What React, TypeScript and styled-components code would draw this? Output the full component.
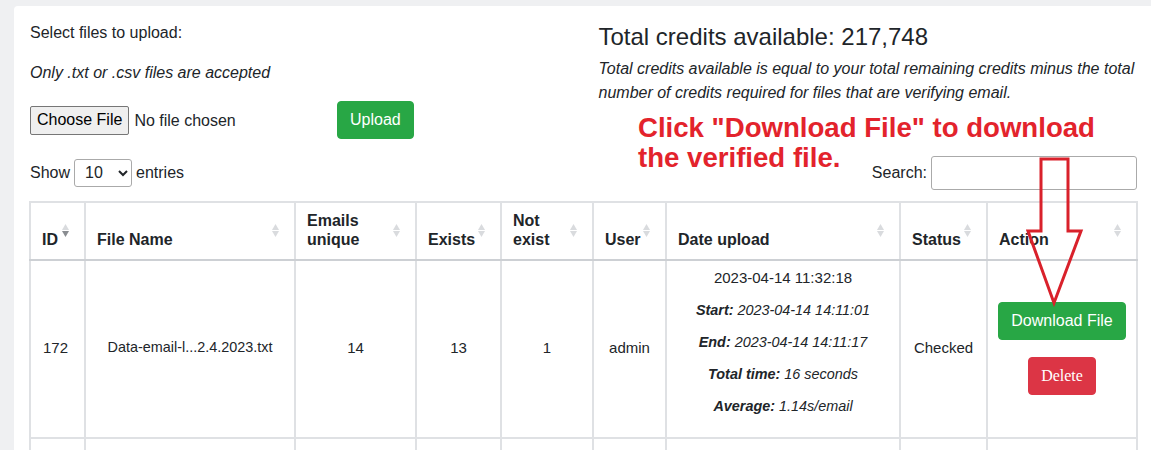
import styled, { createGlobalStyle } from 'styled-components'

const GlobalStyle = createGlobalStyle`
  html, body {
    margin: 0;
    padding: 0;
    overflow: hidden;
    background: #eff0f2;
    font-family: 'Liberation Sans', Arial, sans-serif;
    color: #212529;
  }
`

const Page = styled.div`
  padding: 6px 0 0 14px;
`

const Card = styled.div`
  position: relative;
  background: #fff;
  border-radius: 4px 0 0 0;
  padding: 15px 14px 0 16px;
  min-height: 500px;
`

const TopRow = styled.div`
  display: grid;
  grid-template-columns: 1fr 1fr;
  column-gap: 30px;
`

const Column = styled.div`
  display: flex;
  flex-direction: column;
`

const Text = styled.p<{ $italic?: boolean; $gap?: number }>`
  margin: ${({ $gap }) => $gap ?? 0}px 0 0;
  font-size: 16px;
  line-height: 24px;
  font-style: ${({ $italic }) => ($italic ? 'italic' : 'normal')};
`

const UploadRow = styled.div`
  display: flex;
  align-items: center;
  margin-top: 16px;
  height: 38px;
`

const FileInput = styled.input`
  width: 300px;
  font-family: 'Liberation Sans', Arial, sans-serif;
  font-size: 16px;
  color: #212529;

  &::file-selector-button {
    font-family: 'Liberation Sans', Arial, sans-serif;
    font-size: 16px;
    height: 29px;
    padding: 0 6px;
    margin-right: 5px;
    border: 1px solid #767676;
    border-radius: 2px;
    background: #efefef;
    color: #000;
  }
`

const Button = styled.button<{ $variant: 'success' | 'danger'; $serif?: boolean }>`
  height: 38px;
  padding: 0 12px;
  white-space: nowrap;
  border: 1px solid ${({ $variant }) => ($variant === 'success' ? '#28a745' : '#dc3545')};
  border-radius: 4px;
  background: ${({ $variant }) => ($variant === 'success' ? '#28a745' : '#dc3545')};
  color: #fff;
  font-size: 16px;
  font-family: ${({ $serif }) => ($serif ? "'Liberation Serif', 'Times New Roman', serif" : "'Liberation Sans', Arial, sans-serif")};
  cursor: pointer;
`

const UploadButton = styled(Button)`
  margin-left: 7px;
  margin-top: -1px;
`

const Title = styled.h4`
  margin: 1px 0 0;
  font-size: 24px;
  font-weight: 400;
  line-height: 29px;
`

const ControlsRow = styled.div`
  display: flex;
  justify-content: space-between;
  align-items: center;
  margin-top: 16px;
  height: 35px;
  font-size: 16px;
`

const Inline = styled.label`
  display: flex;
  align-items: center;
  gap: 4px;
`

const EntriesSelect = styled.select`
  width: 58px;
  height: 28px;
  padding: 0 4px 0 6px;
  border: 1px solid #aaa;
  border-radius: 3px;
  background: #fff;
  font-family: 'Liberation Sans', Arial, sans-serif;
  font-size: 16px;
  color: #212529;
`

const SearchInput = styled.input`
  width: 206px;
  height: 34px;
  box-sizing: border-box;
  border: 1px solid #aaa;
  border-radius: 3px;
  margin-top: 1px;
`

const Table = styled.table`
  width: 1107px;
  margin-top: 11px;
  margin-left: -1px;
  border-collapse: collapse;
  table-layout: fixed;
  border: 2px solid #dfe1e4;
`

const Th = styled.th`
  position: relative;
  padding: 8px 30px 10px 11px;
  border: 2px solid #dfe1e4;
  border-bottom-color: #cdd0d4;
  text-align: left;
  vertical-align: bottom;
  font-size: 16px;
  line-height: 19px;
  font-weight: 700;
`

const Td = styled.td<{ $align?: 'left' | 'center'; $size?: number }>`
  padding: 0 12px 4px;
  height: 172px;
  border: 2px solid #dfe1e4;
  text-align: ${({ $align }) => $align ?? 'center'};
  vertical-align: middle;
  font-size: ${({ $size }) => $size ?? 15}px;
`

const DateCell = styled.div`
  display: flex;
  flex-direction: column;
  align-items: center;
  gap: 12px;
  padding: 0 0 10px;
`

const DateLine = styled.div<{ $small?: boolean }>`
  line-height: 20px;
  font-size: ${({ $small }) => ($small ? '14.4px' : '15px')};
  font-style: ${({ $small }) => ($small ? 'italic' : 'normal')};

  b {
    font-weight: 700;
  }
`

const Actions = styled.div`
  display: flex;
  flex-direction: column;
  align-items: center;
  gap: 17px;
  padding-top: 2px;
`

const SortIcon = styled.svg`
  position: absolute;
  right: 15px;
  top: 21px;
`

const Annotation = styled.div`
  position: absolute;
  left: 624px;
  top: 107px;
  color: #e3232c;
  font-size: 27.6px;
  font-weight: 700;
  line-height: 30px;
`

const Arrow = styled.svg`
  position: absolute;
  left: 1012px;
  top: 142px;
`

const Sort = ({ active }: { active?: boolean }) => (
  <SortIcon width="7" height="13" viewBox="0 0 7 13">
    <polygon points="3.5,0 7,6 0,6" fill="#d9dbde" />
    <polygon points="0,7 7,7 3.5,13" fill={active ? '#8a8d91' : '#d9dbde'} />
  </SortIcon>
)

const columns = [
  { label: 'ID', width: 55, active: true },
  { label: 'File Name', width: 210 },
  { label: 'Emails unique', width: 121 },
  { label: 'Exists', width: 85 },
  { label: 'Not exist', width: 92 },
  { label: 'User', width: 73 },
  { label: 'Date upload', width: 234 },
  { label: 'Status', width: 87 },
  { label: 'Action', width: 150 },
]

const App = () => {
  return (
    <Page>
      <GlobalStyle />
      <Card>
        <TopRow>
          <Column>
            <Text>Select files to upload:</Text>
            <Text $italic $gap={16}>
              Only .txt or .csv files are accepted
            </Text>
            <UploadRow>
              <FileInput type="file" accept=".txt,.csv" />
              <UploadButton $variant="success">Upload</UploadButton>
            </UploadRow>
          </Column>
          <Column>
            <Title>Total credits available: 217,748</Title>
            <Text $italic $gap={6}>
              Total credits available is equal to your total remaining credits minus the total number of credits
              required for files that are verifying email.
            </Text>
          </Column>
        </TopRow>

        <ControlsRow>
          <Inline>
            Show
            <EntriesSelect defaultValue="10">
              <option value="10">10</option>
              <option value="25">25</option>
              <option value="50">50</option>
              <option value="100">100</option>
            </EntriesSelect>
            entries
          </Inline>
          <Inline>
            Search:
            <SearchInput type="search" />
          </Inline>
        </ControlsRow>

        <Table>
          <colgroup>
            {columns.map((c) => (
              <col key={c.label} style={{ width: c.width }} />
            ))}
          </colgroup>
          <thead>
            <tr>
              {columns.map((c) => (
                <Th key={c.label}>
                  {c.label}
                  <Sort active={c.active} />
                </Th>
              ))}
            </tr>
          </thead>
          <tbody>
            <tr>
              <Td $align="left">172</Td>
              <Td $size={14.4}>Data-email-l...2.4.2023.txt</Td>
              <Td>14</Td>
              <Td>13</Td>
              <Td>1</Td>
              <Td>admin</Td>
              <Td>
                <DateCell>
                  <DateLine>2023-04-14 11:32:18</DateLine>
                  <DateLine $small>
                    <b>Start:</b> 2023-04-14 14:11:01
                  </DateLine>
                  <DateLine $small>
                    <b>End:</b> 2023-04-14 14:11:17
                  </DateLine>
                  <DateLine $small>
                    <b>Total time:</b> 16 seconds
                  </DateLine>
                  <DateLine $small>
                    <b>Average:</b> 1.14s/email
                  </DateLine>
                </DateCell>
              </Td>
              <Td>Checked</Td>
              <Td>
                <Actions>
                  <Button $variant="success">Download File</Button>
                  <Button $variant="danger" $serif>
                    Delete
                  </Button>
                </Actions>
              </Td>
            </tr>
            <tr>
              {columns.map((c) => (
                <Td key={c.label} />
              ))}
            </tr>
          </tbody>
        </Table>

        <Annotation>
          Click "Download File" to download
          <br />
          the verified file.
        </Annotation>
        <Arrow width="60" height="160" viewBox="0 0 60 160">
          <polygon
            points="15,11 42,11 42,83 55,83 28,155 2,83 15,83"
            fill="none"
            stroke="#d9212b"
            strokeWidth="3"
          />
        </Arrow>
      </Card>
    </Page>
  )
}

export default App
